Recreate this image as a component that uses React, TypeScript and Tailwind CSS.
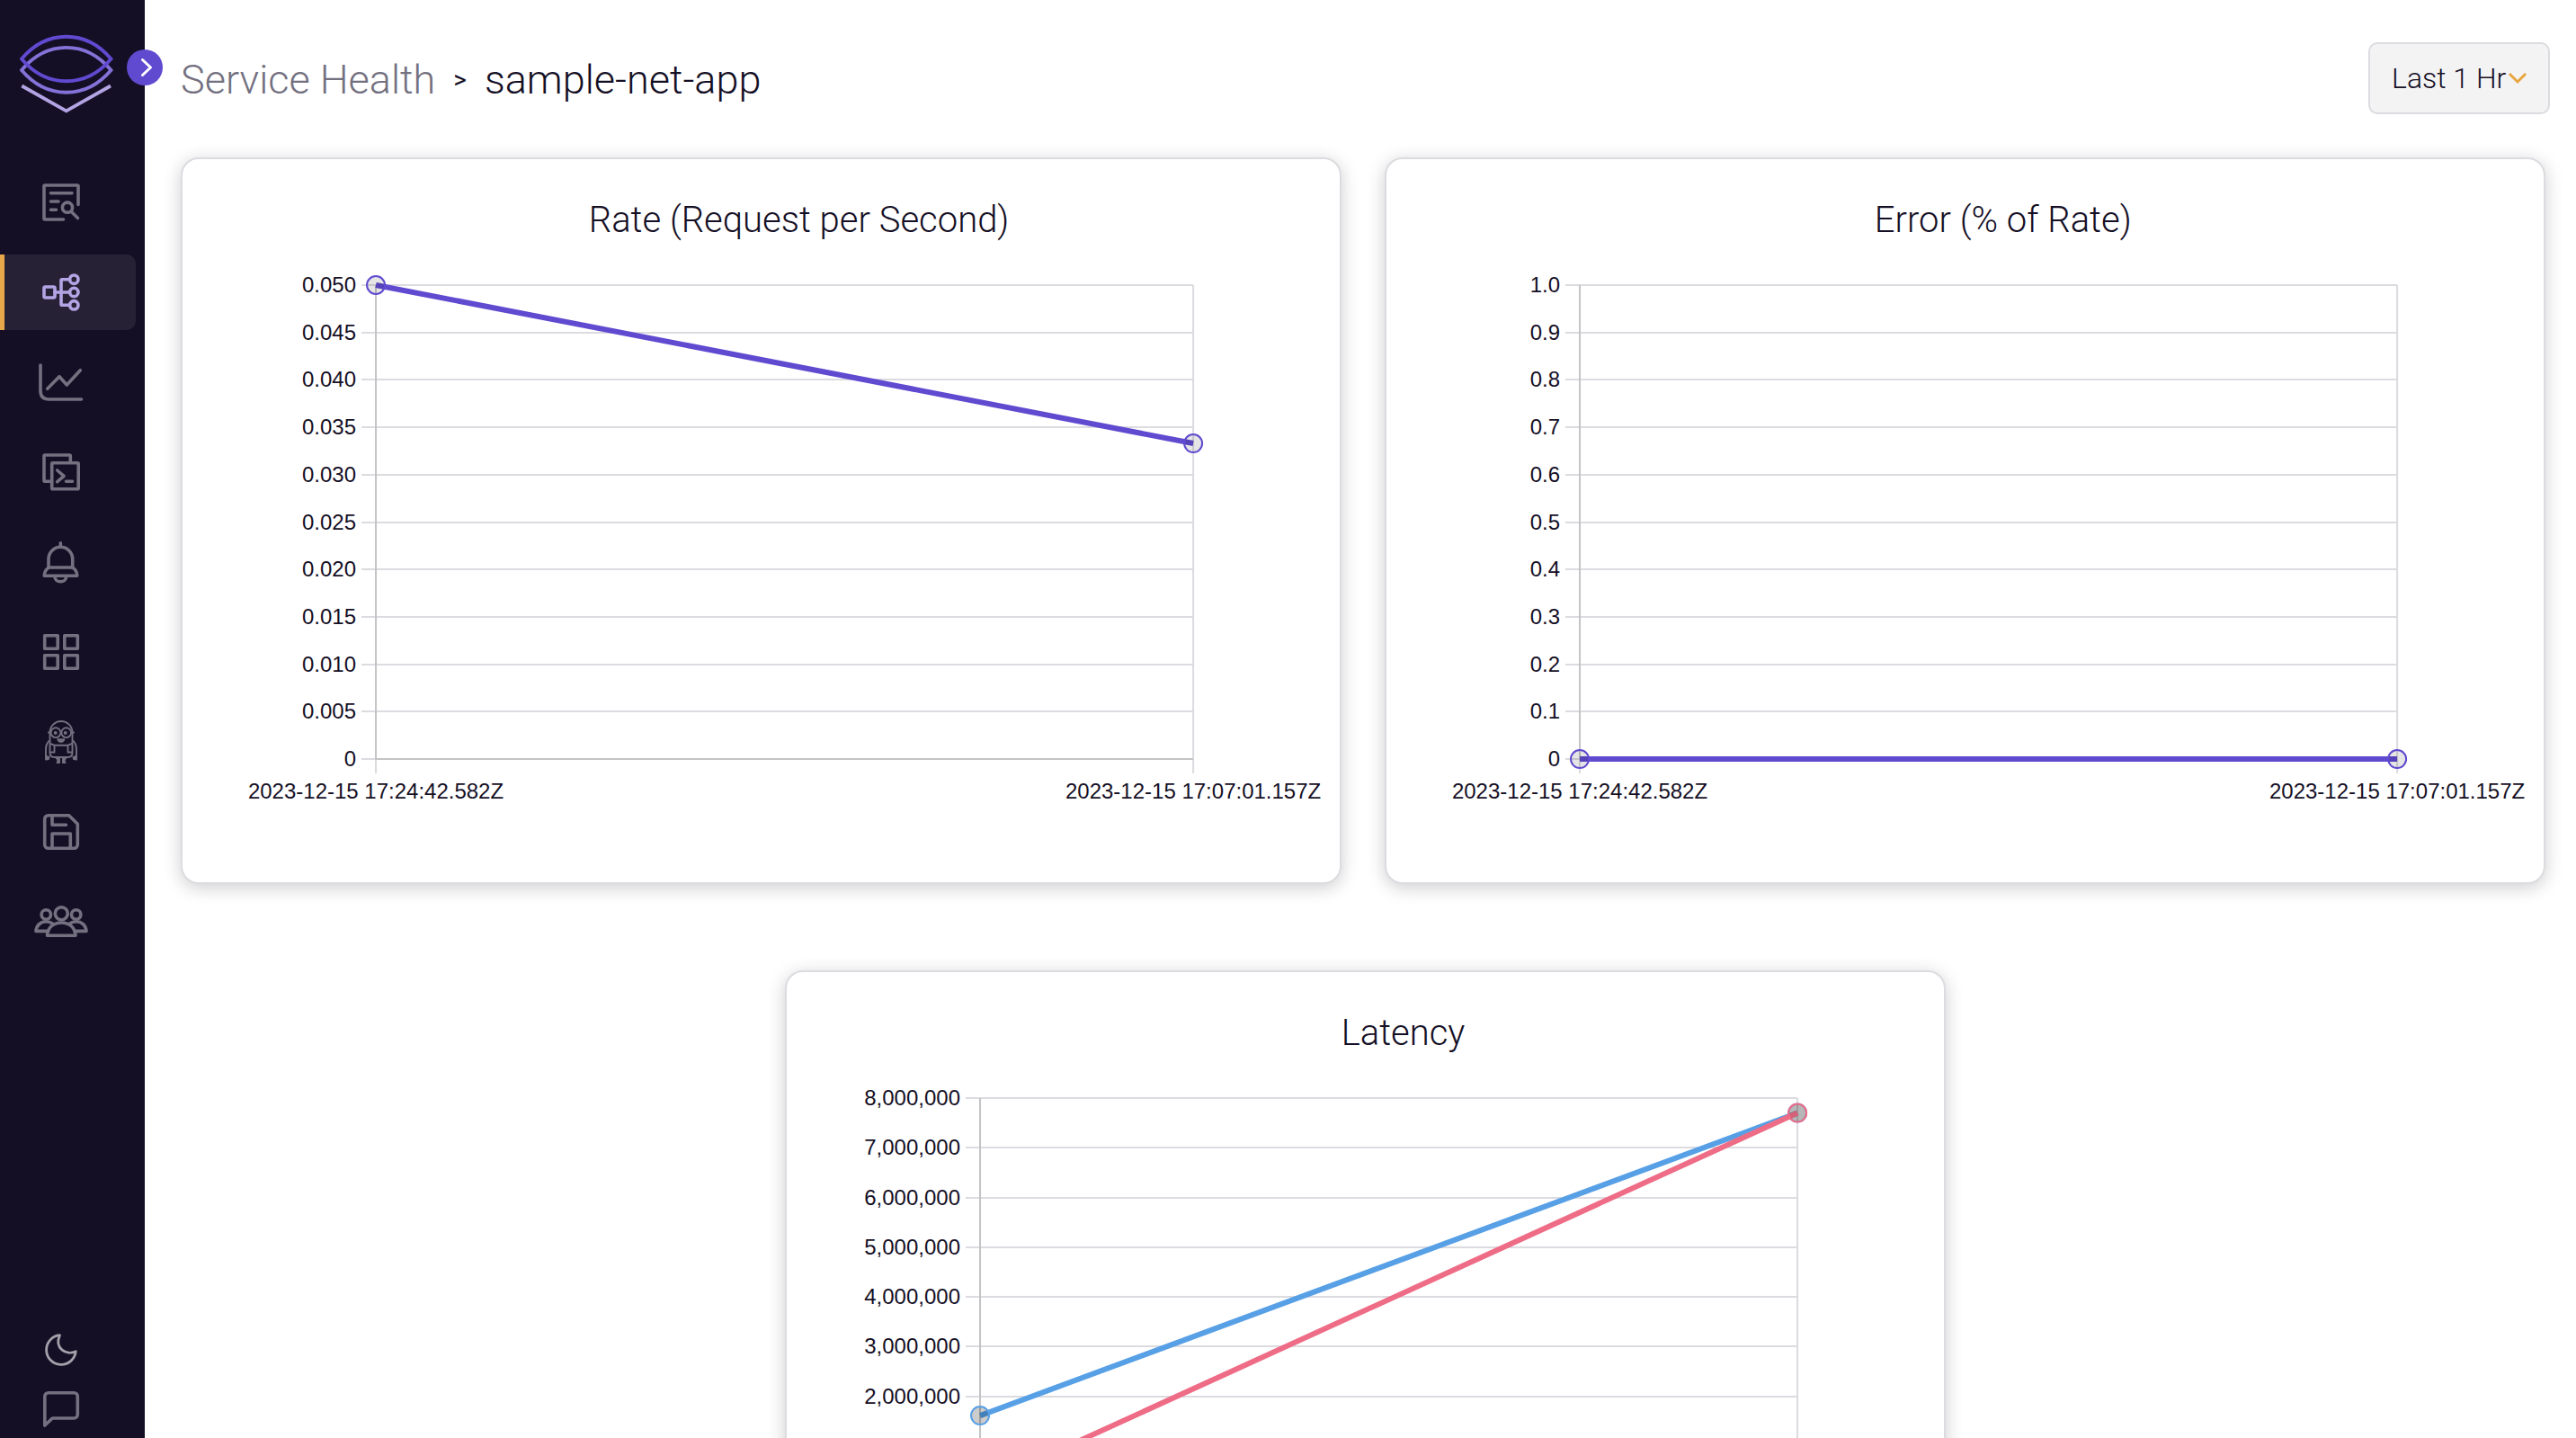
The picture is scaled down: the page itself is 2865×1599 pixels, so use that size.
import React, { useState } from "react";

type IconProps = { children: React.ReactNode; width?: string; className?: string };

function Icon({ children, width = "3.6", className = "" }: IconProps) {
  return (
    <svg
      viewBox="0 0 60 60"
      className={`size-[60px] ${className}`}
      fill="none"
      stroke="currentColor"
      strokeWidth={width}
      strokeLinecap="round"
      strokeLinejoin="round"
      aria-hidden="true"
    >
      {children}
    </svg>
  );
}

const navItems = [
  {
    label: "Logs",
    icon: (
      <Icon>
        <path d="M32.500 49H12a1 1 0 0 1-1-1V12a1 1 0 0 1 1-1h36a1 1 0 0 1 1 1v20.500" />
        <path d="M18.500 19.700H42M18.500 29H27M18.500 38.300H24.500M42 41l6.500 6.500" />
        <circle cx="37" cy="35.700" r="5.600" />
      </Icon>
    ),
  },
  {
    label: "Services",
    icon: (
      <Icon>
        <rect x="11" y="24" width="12" height="12" rx="1.500" />
        <path d="M23 30h16.500M39.500 15.700H31a1 1 0 0 0-1 1v26.600a1 1 0 0 0 1 1h8.500" />
        <circle cx="44.300" cy="15.700" r="4.700" />
        <circle cx="44.300" cy="30" r="4.700" />
        <circle cx="44.300" cy="44.300" r="4.700" />
      </Icon>
    ),
  },
  {
    label: "Metrics",
    icon: (
      <Icon>
        <path d="M7 11v28.500Q7 49 16.500 49H52.500" />
        <path d="M14.700 37.300L28 23.700l8.300 9.300 15-16.300" />
      </Icon>
    ),
  },
  {
    label: "Live tail",
    icon: (
      <Icon>
        <path d="M19.500 40.300H12a1 1 0 0 1-1-1V12a1 1 0 0 1 1-1h27.300a1 1 0 0 1 1 1v7.500" />
        <rect x="19.700" y="19.700" width="29.500" height="29" rx="1" />
        <path d="M25.700 28l7.400 6.300-7.400 6.400M35.500 40.300h7" />
      </Icon>
    ),
  },
  {
    label: "Alerts",
    icon: (
      <Icon>
        <path d="M29.300 8.700v4M16 36v-9.400a13.350 13.350 0 0 1 26.700 0V36" />
        <path d="M18 36h23c4 0 6.800 5 6.800 9.300H11.200C11.200 41 14 36 18 36Z" />
        <path d="M23 46.500c0 3.300 3 5.300 6.300 5.300s6.300-2 6.300-5.300" />
      </Icon>
    ),
  },
  {
    label: "Dashboards",
    icon: (
      <Icon>
        <rect x="11.700" y="11.700" width="14.500" height="14.500" />
        <rect x="33.800" y="11.700" width="14.500" height="14.500" />
        <rect x="11.700" y="33.800" width="14.500" height="14.500" />
        <rect x="33.800" y="33.800" width="14.500" height="14.500" />
      </Icon>
    ),
  },
  {
    label: "Assistant",
    icon: (
      <Icon width="1.9">
        <path d="M17.500 42V19.500a12.500 12.500 0 0 1 25 0V42q0 5-5 5h-15q-5 0-5-5Z" />
        <circle cx="24" cy="19.700" r="5.400" />
        <circle cx="35.700" cy="19.700" r="5.400" />
        <circle cx="23.700" cy="19.900" r="1" fill="currentColor" />
        <circle cx="34.700" cy="19.900" r="1" fill="currentColor" />
        <path d="M26.300 27.300h7q-1 2.500-3.500 2.500t-3.500-2.500Z" fill="currentColor" />
        <path d="M16 19.500h2M42 19.500h2M18 32l4.500 1.700h15L42 32M22.500 34v7.500H18M37.500 34v7.500H42" />
        <path d="M16.500 29q-3.500 3-3.500 10v8M43.500 29q3.500 3 3.500 10v8" />
        <path d="M13 46l3.500 1-.5 2-3 .5ZM47 46l-3.500 1 .5 2 3 .5Z" fill="currentColor" />
        <path d="M25 48.500h3V53h-2.500M35 48.500h-3V53h2.500" fill="currentColor" />
      </Icon>
    ),
  },
  {
    label: "Saved",
    icon: (
      <Icon>
        <path d="M15.700 11.700H38.700L48.300 21.300V44.300a4 4 0 0 1-4 4H15.700a4 4 0 0 1-4-4V15.700a4 4 0 0 1 4-4Z" />
        <path d="M20 12v10.200h15.500M20 48V32h20.300v16" />
      </Icon>
    ),
  },
  {
    label: "Team",
    icon: (
      <Icon>
        <circle cx="30.300" cy="20.700" r="7" />
        <circle cx="13.300" cy="22" r="5.200" />
        <circle cx="46.700" cy="22" r="5.200" />
        <path d="M14.500 45.300H46C45.500 37 40 31 30.300 31S15 37 14.500 45.300Z" />
        <path d="M15.500 40.400H2C2.500 34 7 29.700 13.500 29.700c3 0 5 .8 7.200 2.500M45 40.400H58C57.500 34 53 29.700 46.500 29.700c-3 0-5 .8-7.200 2.500" />
      </Icon>
    ),
  },
];

function Logo() {
  return (
    <svg viewBox="22 38 104 88" className="h-[88px] w-[104px]" fill="none" strokeWidth="3.8" aria-label="Logo" role="img">
      <path stroke="#8472d9" d="M24 78C52 44.500 95.500 44.500 123.500 78C95.500 111 52 111 24 78Z" />
      <path stroke="#5f4ad0" d="M24 65.500C52 32.500 95.500 32.500 123.500 65.500C95.500 98.500 52 98.500 24 65.500Z" />
      <path stroke="#b3a4e4" d="M24.300 95.500L73.700 123.300L123 95.500" />
    </svg>
  );
}

function Sidebar() {
  return (
    <aside className="relative flex h-full w-[161px] shrink-0 flex-col bg-[#150f25] text-[#737080]">
      <a href="#home" className="ml-[22px] mt-[38px] block w-fit">
        <Logo />
      </a>
      <button
        type="button"
        aria-label="Expand menu"
        className="absolute -right-5 top-[55px] flex size-10 items-center justify-center rounded-full bg-[#5f4ad0] text-white"
      >
        <svg viewBox="0 0 40 40" className="size-10" fill="none" stroke="currentColor" strokeWidth="3" strokeLinecap="round" strokeLinejoin="round">
          <path d="M17.500 11.500l9 8.500-9 8.500" />
        </svg>
      </button>
      <nav className="mt-[57px] flex flex-col gap-4">
        {navItems.map((item, i) => (
          <a
            key={item.label}
            href={`#${i}`}
            aria-label={item.label}
            className={
              i === 1
                ? "flex h-[84px] w-[151px] items-center rounded-r-[10px] border-l-[5px] border-[#e8a84a] bg-[#262135] pl-[33px] text-[#b3a4e4]"
                : "flex h-[84px] w-[151px] items-center border-l-[5px] border-transparent pl-[33px]"
            }
          >
            {item.icon}
          </a>
        ))}
      </nav>
      <div className="mt-auto flex flex-col gap-1.5 pb-0.5 pl-[38px]">
        <button type="button" aria-label="Dark mode" className="w-fit text-[#a3a0aa]">
          <Icon width="2.8">
            <path d="M28.500 13.700A16.400 16.400 0 1 0 46.300 31.700C36 36.500 22 28.500 28.500 13.700Z" />
          </Icon>
        </button>
        <button type="button" aria-label="Feedback" className="w-fit">
          <Icon>
            <path d="M15.700 11.700H44.300a4 4 0 0 1 4 4V36a4 4 0 0 1-4 4H20.300L11.800 48V15.700a4 4 0 0 1 4-4Z" />
          </Icon>
        </button>
      </div>
    </aside>
  );
}

type Series = { color: string; values: [number, number]; shade: number };
type ChartProps = {
  title: string;
  max: number;
  bottom: number;
  ticks: string[];
  series: Series[];
};

const LEFT = 215;
const RIGHT = 1124;
const TOP = 32;
const stamps = ["2023-12-15 17:24:42.582Z", "2023-12-15 17:07:01.157Z"];

function ChartCard({ title, max, bottom, ticks, series }: ChartProps) {
  const step = (bottom - TOP) / (ticks.length - 1);
  const y = (v: number) => bottom - (v / max) * (bottom - TOP);
  return (
    <section className="w-[49%] shrink-0 rounded-[20px] border-2 border-[#dcdbe0] bg-white shadow-[0_4px_20px_rgba(0,0,0,0.2)]">
      <h2 className="flex h-[108px] items-end justify-center pb-4 pl-[84px] text-[40px] leading-[48px] font-[350]">{title}</h2>
      <svg
        viewBox="0 0 1287 696"
        className="block h-auto w-full font-['Liberation_Sans',Arial,sans-serif] text-[24px]"
        role="img"
        aria-label={title}
      >
        {ticks.map((t, i) => {
          const ty = Math.round(TOP + i * step);
          return (
            <g key={t}>
              <path d={`M${LEFT - 16} ${ty}H${RIGHT}`} stroke="#dcdbe0" strokeWidth="2" />
              <text x={LEFT - 22} y={ty + 8} textAnchor="end" fill="#150f25">
                {t}
              </text>
            </g>
          );
        })}
        <path d={`M${LEFT} ${bottom}V${bottom + 16}M${RIGHT} ${TOP}V${bottom + 16}`} stroke="#dcdbe0" strokeWidth="2" />
        <path d={`M${LEFT} ${TOP}V${bottom}H${RIGHT}`} fill="none" stroke="#c4c4c6" strokeWidth="2" />
        {stamps.map((s, i) => (
          <text key={s} x={i ? RIGHT : LEFT} y={bottom + 44} textAnchor="middle" fill="#150f25">
            {s}
          </text>
        ))}
        {series.map((s) => (
          <g key={s.color} stroke={s.color}>
            <path d={`M${LEFT} ${y(s.values[0])}L${RIGHT} ${y(s.values[1])}`} strokeWidth="6" />
            <circle cx={LEFT} cy={y(s.values[0])} r="10" strokeWidth="2" fill="#000" fillOpacity={s.shade} />
            <circle cx={RIGHT} cy={y(s.values[1])} r="10" strokeWidth="2" fill="#000" fillOpacity={s.shade} />
          </g>
        ))}
      </svg>
    </section>
  );
}

const rateTicks = ["0.050", "0.045", "0.040", "0.035", "0.030", "0.025", "0.020", "0.015", "0.010", "0.005", "0"];
const errorTicks = ["1.0", "0.9", "0.8", "0.7", "0.6", "0.5", "0.4", "0.3", "0.2", "0.1", "0"];
const latencyTicks = [
  "8,000,000",
  "7,000,000",
  "6,000,000",
  "5,000,000",
  "4,000,000",
  "3,000,000",
  "2,000,000",
  "1,000,000",
  "0",
];

export default function App() {
  const [range, setRange] = useState("Last 1 Hr");
  return (
    <div className="flex h-screen bg-white font-['Roboto',sans-serif] text-[#150f25]">
      <Sidebar />
      <main className="min-w-0 flex-1 overflow-y-auto pb-12 pl-10 pr-[29px] pt-[47px] [scrollbar-width:none]">
        <header className="flex h-20 items-center justify-between">
          <nav aria-label="Breadcrumb" className="flex items-center gap-5 pt-1 text-[45px] leading-[52px] font-[350]">
            <a href="#services" className="text-[#737080]">
              Service Health
            </a>
            <span className="text-[28px] font-normal">&gt;</span>
            <span>sample-net-app</span>
          </nav>
          <div className="relative">
            <select
              aria-label="Time range"
              value={range}
              onChange={(e) => setRange(e.target.value)}
              className="h-20 w-[202px] appearance-none rounded-[10px] border-2 border-[#dcdbe0] bg-[#f3f3f3] pl-6 text-[32px] leading-10 font-[350]"
            >
              <option>Last 1 Hr</option>
              <option>Last 5 Hr</option>
              <option>Last 24 Hr</option>
            </select>
            <svg
              viewBox="0 0 24 16"
              className="pointer-events-none absolute right-6 top-8 h-4 w-6"
              fill="none"
              stroke="#e8a640"
              strokeWidth="3"
            >
              <path d="M3 3l9 9 9-9" />
            </svg>
          </div>
        </header>
        <div className="mt-12 flex gap-12">
          <ChartCard
            title="Rate (Request per Second)"
            max={0.05}
            bottom={559}
            ticks={rateTicks}
            series={[{ color: "#5f4ad0", values: [0.05, 0.0333], shade: 0.1 }]}
          />
          <ChartCard
            title="Error (% of Rate)"
            max={1}
            bottom={559}
            ticks={errorTicks}
            series={[{ color: "#5f4ad0", values: [0, 0], shade: 0.1 }]}
          />
        </div>
        <div className="mt-24 flex justify-center">
          <ChartCard
            title="Latency"
            max={8000000}
            bottom={474}
            ticks={latencyTicks}
            series={[
              { color: "#58a0e6", values: [1610000, 7700000], shade: 0.2 },
              { color: "#ee6c86", values: [190000, 7700000], shade: 0.1 },
            ]}
          />
        </div>
      </main>
    </div>
  );
}
